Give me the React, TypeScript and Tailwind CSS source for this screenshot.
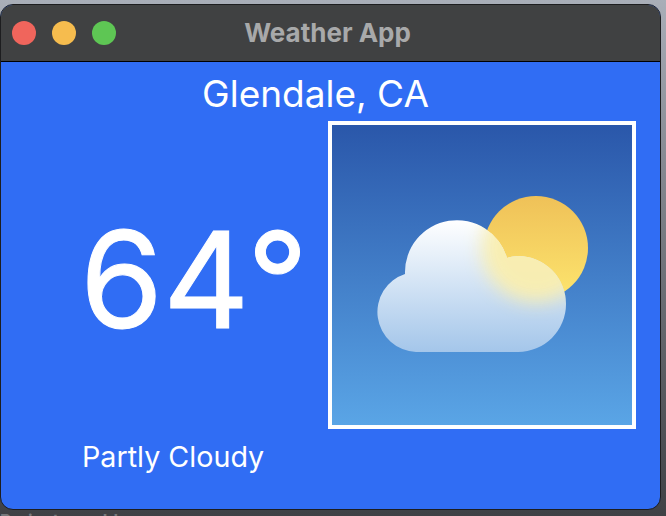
import React from 'react'

const cloudPath = 'M416 352H518A48 48 0 0 0 518 256Q512 256 507 258A52 52 0 0 0 405 274A40 40 0 0 0 416 352Z'

const WeatherIcon = () => (
  <svg viewBox="332 125 300 300" className="block w-[300px] h-[300px]">
    <defs>
      <linearGradient id="sky" x1="0" y1="0" x2="0" y2="1">
        <stop offset="0" stopColor="#2a57aa" />
        <stop offset="1" stopColor="#5aa5e6" />
      </linearGradient>
      <linearGradient id="sun" x1="0" y1="0" x2="0" y2="1">
        <stop offset="0" stopColor="#efc158" />
        <stop offset="1" stopColor="#fde56e" />
      </linearGradient>
      <linearGradient id="cloud" x1="0" y1="0" x2="0" y2="1">
        <stop offset="0" stopColor="#ffffff" />
        <stop offset="1" stopColor="#a4c6ea" />
      </linearGradient>
      <filter id="blur" x="-30%" y="-30%" width="160%" height="160%">
        <feGaussianBlur stdDeviation="9" />
      </filter>
      <clipPath id="cloudClip">
        <path d={cloudPath} />
      </clipPath>
    </defs>
    <rect x="332" y="125" width="300" height="300" fill="url(#sky)" />
    <circle cx="536" cy="248" r="52" fill="url(#sun)" />
    <path d={cloudPath} fill="url(#cloud)" />
    <g clipPath="url(#cloudClip)">
      <circle cx="536" cy="248" r="54" fill="#f9eeae" opacity="0.95" filter="url(#blur)" />
    </g>
  </svg>
)

const App = () => {
  return (
    <div className="relative w-[666px] h-[516px] overflow-hidden bg-gradient-to-b from-[#a9aeb8] to-[#3f4145] pt-[4px] font-['Inter','Liberation_Sans',sans-serif]">
      <div className="w-[661px] h-[506px] flex flex-col overflow-hidden rounded-[13px] border border-[#1d1d1f] bg-[#306df4]">
        <div className="h-[57px] shrink-0 flex items-center relative bg-[#404142] border-b border-black pl-[11px] gap-[16px]">
          <span className="w-[24px] h-[24px] rounded-full bg-[#f0655c]" />
          <span className="w-[24px] h-[24px] rounded-full bg-[#f6bc4e]" />
          <span className="w-[24px] h-[24px] rounded-full bg-[#5ec654]" />
          <span className="absolute inset-x-0 text-center text-[26px] font-bold text-[#a8a9aa] pr-[6px] pb-[2px]">
            Weather App
          </span>
        </div>
        <div className="flex-1 flex flex-col">
          <div className="h-[59px] flex items-center justify-center pt-[4px] pr-[30px] text-[37px] text-white">
            Glendale, CA
          </div>
          <div className="flex pl-[79px]">
            <div className="w-[248px] flex flex-col">
              <div className="h-[308px] flex items-center pt-[8px] text-[134px] leading-none text-white [-webkit-text-stroke:1px_white]">
                64°
              </div>
              <div className="mt-[6px] pl-[2px] text-[28.7px] text-white">Partly Cloudy</div>
            </div>
            <div className="border-[4px] border-white h-fit">
              <WeatherIcon />
            </div>
          </div>
        </div>
      </div>
      <span className="absolute left-0 top-[509px] text-[17px] font-bold text-[#77797c]">Project:roupbb</span>
    </div>
  )
}

export default App
